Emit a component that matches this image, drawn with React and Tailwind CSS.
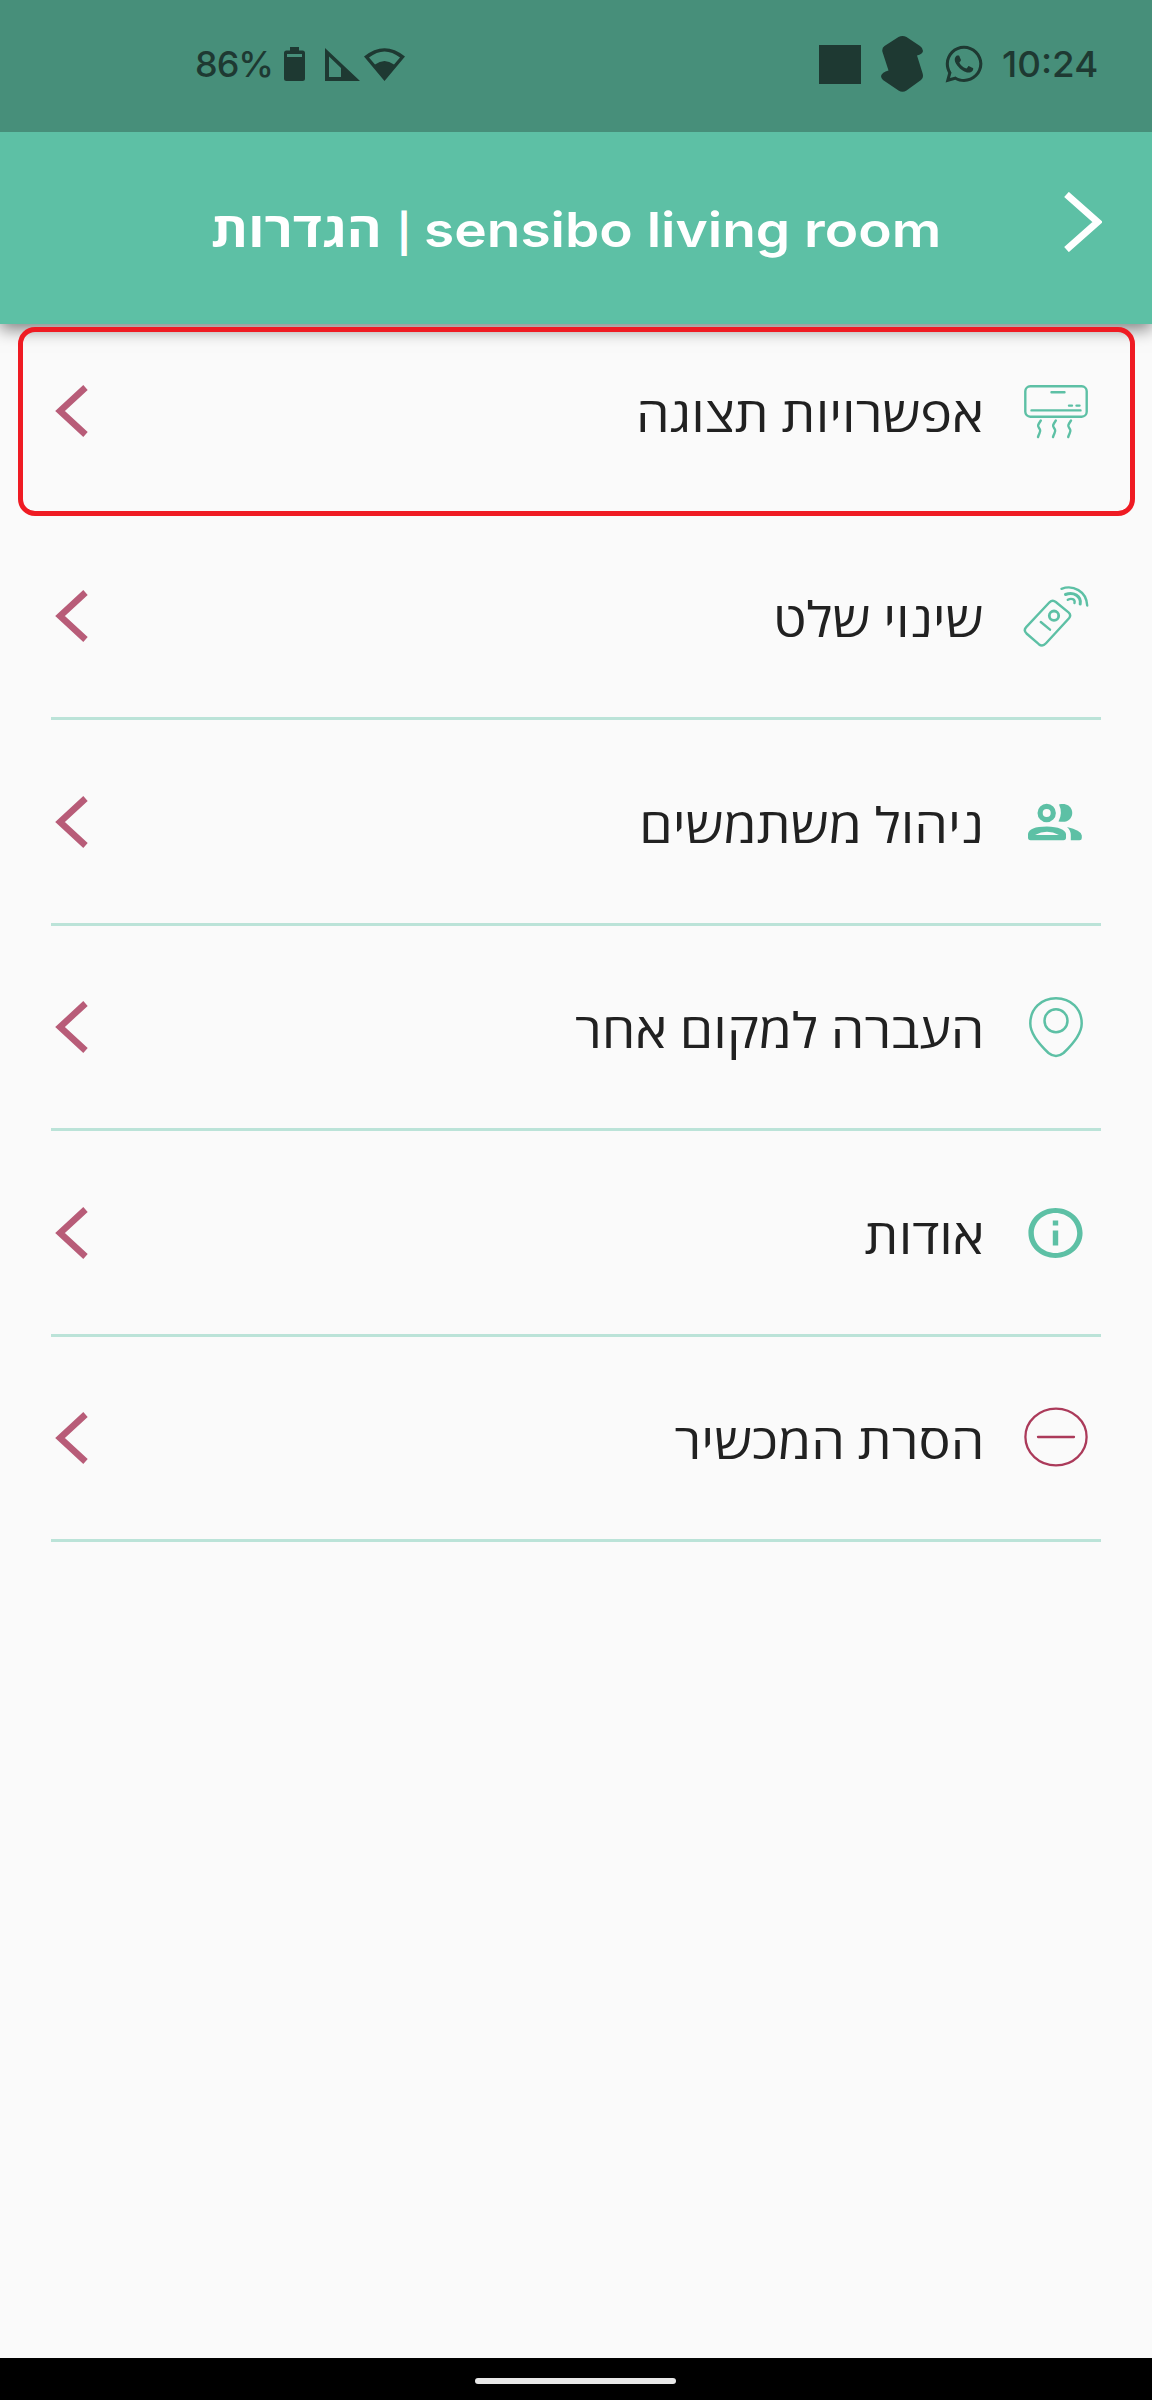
import { FaWhatsapp } from 'react-icons/fa';
import { MdInfoOutline } from 'react-icons/md';

function AirConditionerIcon() {
  return (
    <svg
      className="h-16 w-16 text-[#5dc0a5]"
      viewBox="0 0 64 64"
      fill="none"
      stroke="currentColor"
      strokeWidth="2.4"
      strokeLinecap="round"
    >
      <rect x="1.3" y="7.3" width="61.4" height="30.4" rx="5" />
      <path d="M27.5 13.2H40.5M45 26.6H48M52.5 26.6H55.5M7.5 31.4H56.5" />
      <path d="M16.8 41.5c-4 6 -3 5 -.8 9c1 2 -.5 3 -2 7.5M31.8 41.5c-4 6 -3 5 -.8 9c1 2 -.5 3 -2 7.5M47 41.5c-4 6 -3 5 -.8 9c1 2 -.5 3 -2 7.5" />
    </svg>
  );
}

function RemoteIcon() {
  return (
    <svg
      className="h-16 w-16 overflow-visible text-[#5dc0a5]"
      viewBox="0 0 64 64"
      fill="none"
      stroke="currentColor"
      strokeWidth="2.4"
      strokeLinecap="round"
    >
      <path d="M25.5 18.3Q28.5 15.3 31.8 18L44.5 28.3Q47.6 31 45 34.3L22 59.3Q18.5 63.2 14.8 60.2L2.5 49.5Q-.8 46.3 2.2 43.2Z" />
      <circle cx="30" cy="31.7" r="4.7" strokeWidth="2.8" />
      <path d="M16.8 38L26 45.7" />
      <path d="M37.5 4.8C49 .5 62.5 7 63.2 21.5" />
      <path d="M41.5 10.5C49.5 7.5 57.5 12 56.2 20" strokeWidth="3" />
      <path d="M43.8 15.8C47 14 51.5 15 50.5 19" />
    </svg>
  );
}

function UsersIcon() {
  return (
    <svg className="h-16 w-16 text-[#5dc0a5]" viewBox="0 0 64 64" fill="none">
      <circle cx="22.7" cy="23" r="6.6" stroke="currentColor" strokeWidth="5.2" />
      <path
        d="M35 14.5C47 11.5 51.5 23 46 29C43 32.5 38.5 32 34.5 31.4Q39 23 35 14.5Z"
        fill="currentColor"
      />
      <path
        fillRule="evenodd"
        d="M4 44Q5 36.5 22.8 36.5Q40.5 37 42 44V47.5Q42 50.2 39.5 50.2H6.5Q4 50.2 4 47.5ZM11 45H35Q23 38.5 11 45Z"
        fill="currentColor"
      />
      <path
        d="M43 37Q57 40 57.8 45.5V48Q57.8 50.2 55.5 50.2H46.8V45Q46.8 40.5 43 37Z"
        fill="currentColor"
      />
    </svg>
  );
}

function PinIcon() {
  return (
    <svg
      className="h-16 w-16 text-[#5dc0a5]"
      viewBox="0 0 64 64"
      fill="none"
      stroke="currentColor"
      strokeWidth="2.5"
    >
      <path d="M32 3.3C17 3.3 6.3 14 6.3 28.5C6.3 39 16 50 24.5 58Q32 64 39.5 58C48 50 57.7 39 57.7 28.5C57.7 14 47 3.3 32 3.3Z" />
      <circle cx="32" cy="25.8" r="11.5" />
    </svg>
  );
}

function InfoIcon() {
  return (
    <MdInfoOutline
      className="mr-0.5 h-[60px] w-[65px] shrink-0 text-[#5dc0a5]"
      preserveAspectRatio="none"
    />
  );
}

function RemoveIcon() {
  return (
    <svg
      className="h-16 w-16 text-[#ab3a5a]"
      viewBox="0 0 64 64"
      fill="none"
      stroke="currentColor"
      strokeWidth="2.3"
      strokeLinecap="round"
    >
      <ellipse cx="32" cy="31" rx="30.6" ry="28.4" />
      <path d="M14 31H50" />
    </svg>
  );
}

const items = [
  { label: 'אפשרויות תצוגה', icon: AirConditionerIcon },
  { label: 'שינוי שלט', icon: RemoteIcon },
  { label: 'ניהול משתמשים', icon: UsersIcon },
  { label: 'העברה למקום אחר', icon: PinIcon },
  { label: 'אודות', icon: InfoIcon },
  { label: 'הסרת המכשיר', icon: RemoveIcon },
];

function StatusBar() {
  return (
    <div
      dir="ltr"
      className="relative z-20 flex h-[132px] items-center justify-between bg-[#478f7a] pr-[52px] pb-1 pl-[195px] font-['Inter',sans-serif] text-[36px] font-medium text-[#1e3932]"
    >
      <div className="flex items-center">
        <span className="w-[89px] tracking-[-1px]">86%</span>
        <svg className="h-[34px] w-[21px]" viewBox="0 0 21 34" fill="currentColor">
          <path
            fillRule="evenodd"
            d="M6 0H15V3.5H18.5Q21 3.5 21 6V31.5Q21 34 18.5 34H2.5Q0 34 0 31.5V6Q0 3.5 2.5 3.5H6ZM3 7V10H18V7Z"
          />
        </svg>
        <svg className="ml-5 h-[33px] w-[35px]" viewBox="0 0 35 33" fill="currentColor">
          <path fillRule="evenodd" d="M0 0L35 33H0ZM4 8.5V29H16V20Z" />
        </svg>
        <svg className="ml-1 h-[33px] w-[41px]" viewBox="0 0 41 33" fill="currentColor">
          <path
            fillRule="evenodd"
            d="M0 8.5Q20.5 -8 41 8.5L20.5 33ZM5 9.5L11 16.5Q20.5 9.5 30 16.5L36 9.5Q20.5 -2.5 5 9.5Z"
          />
        </svg>
      </div>
      <div className="flex items-center">
        <div className="h-[39px] w-[42px] bg-[#1e3932]" />
        <svg className="ml-5 h-14 w-[42px]" viewBox="0 0 42 56" fill="currentColor">
          <path d="M17.5 1Q21.5 -1 25.5 1L39 10Q42 12 42 15Q41.5 18 36 19.5L41.5 37Q43 42 40 44L25.5 54.5Q21.5 57 17.5 54.5L2 44Q0 42 0 40Q1 36 7.5 34.5L1.5 16Q.5 12 3.5 10Z" />
        </svg>
        <FaWhatsapp className="ml-5 h-[42px] w-[42px]" />
        <span className="ml-[17px] w-[98px] origin-left scale-x-[1.02]">10:24</span>
      </div>
    </div>
  );
}

function Header() {
  return (
    <header className="relative z-10 flex h-48 items-center bg-[#5dc0a5] pr-[50px] pl-[211px] text-white shadow-[0_5px_16px_rgba(0,0,0,0.5)]">
      <svg
        className="mb-3 h-[60px] w-[38px]"
        viewBox="0 0 38 60"
        fill="none"
        stroke="currentColor"
        strokeWidth="7"
      >
        <path d="M2.5 2.5L33.5 30L2.5 57.5" />
      </svg>
      <h1
        dir="ltr"
        className="flex flex-1 items-baseline pt-0.5 font-['Inter',sans-serif] text-[48px] font-semibold whitespace-nowrap"
      >
        <span
          dir="rtl"
          className="flex w-[186px] origin-left scale-x-[1.11] justify-end font-['Open_Sans',sans-serif] font-bold"
        >
          הגדרות
        </span>
        <span className="w-[27px] text-[38px] font-bold">|</span>
        <span className="origin-left scale-x-[1.146]">sensibo living room</span>
      </h1>
    </header>
  );
}

function SettingsRow({ item }) {
  const Icon = item.icon;
  return (
    <li className="flex h-[205.5px] items-center border-b-3 border-[#bbe3d8] pt-px pr-[13px] pl-1">
      <div className="flex w-16 justify-center">
        <Icon />
      </div>
      <span className="mt-[5px] mr-10 origin-right scale-x-[1.105] text-[48.5px] [word-spacing:-1px] whitespace-nowrap">
        {item.label}
      </span>
      <svg
        className="mr-auto h-[52px] w-[34px]"
        viewBox="0 0 34 52"
        fill="none"
        stroke="#b85c78"
        strokeWidth="6.5"
      >
        <path d="M30.5 2.5L5 26L30.5 49.5" />
      </svg>
    </li>
  );
}

export default function App() {
  return (
    <div
      dir="rtl"
      className="flex h-[2400px] w-[1152px] flex-col overflow-hidden bg-[#fafafa] font-['Open_Sans',sans-serif] text-[#212121]"
    >
      <StatusBar />
      <Header />
      <main className="relative flex-1">
        <ul className="-mt-[15px] px-[51px]">
          {items.map((item) => (
            <SettingsRow key={item.label} item={item} />
          ))}
        </ul>
        {/** HIGHLIGHT */}
        <div className="absolute top-[3px] right-[17px] z-20 h-[189px] w-[1117px] rounded-[17px] border-5 border-[#ef1b23]" />
      </main>
      <div className="flex h-[42px] items-center justify-center bg-black pr-0.5">
        <div className="mt-1 h-1.5 w-[201px] rounded-full bg-[#e8e8e8]" />
      </div>
    </div>
  );
}
